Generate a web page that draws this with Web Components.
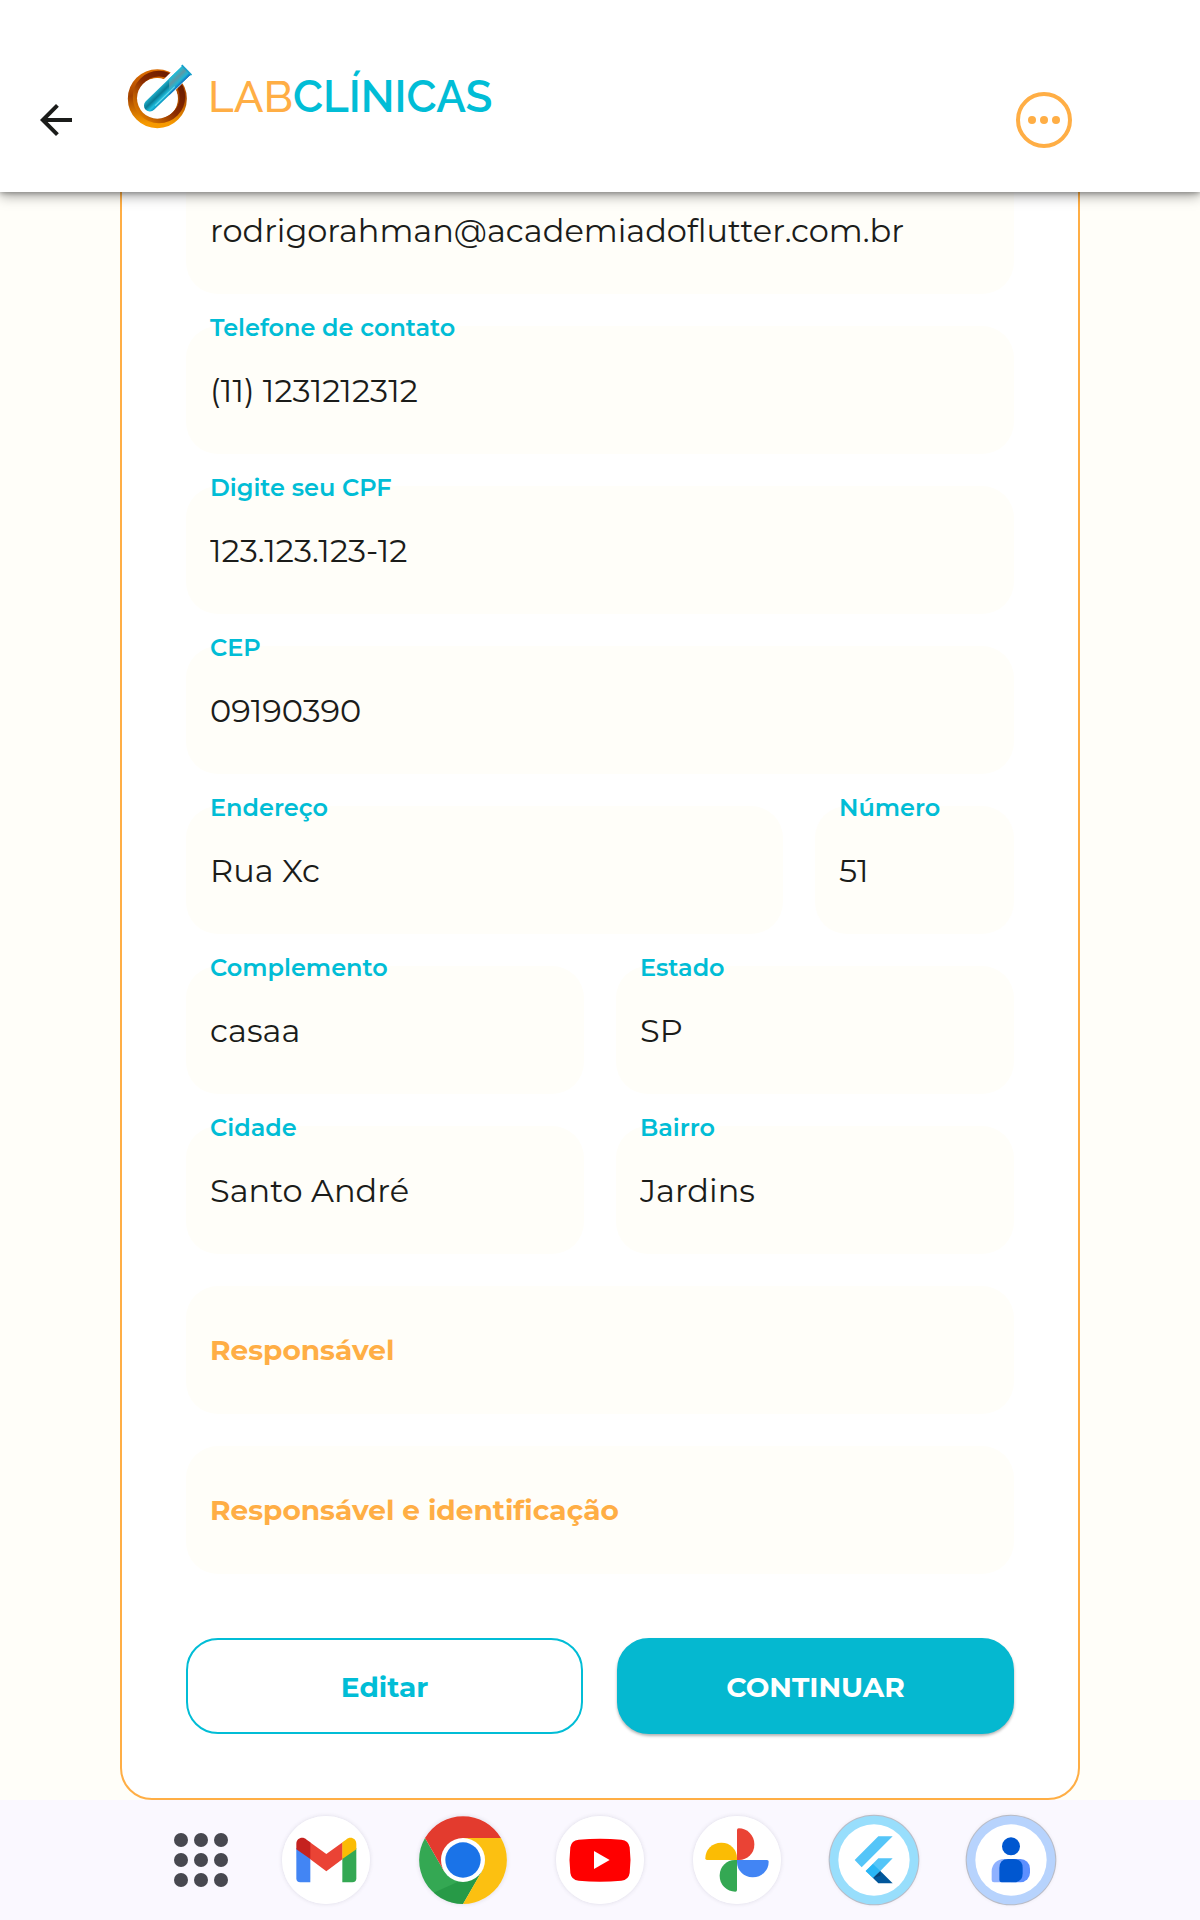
<!DOCTYPE html>
<html lang="pt-BR">
<head>
<meta charset="utf-8">
<meta name="viewport" content="width=device-width, initial-scale=1">
<title>LabClínicas</title>
<style>
  :root {
    --cyan: #01bdd6;
    --orange: #ffae45;
    --cream: #fffef9;
    --ink: #1b1c1a;
  }
  body {
    margin: 0;
    background: var(--cream);
    color: var(--ink);
    font-family: Montserrat, Inter, "Open Sans", sans-serif;
  }
</style>
</head>
<body>
<lab-app>
  <lab-header slot="header"></lab-header>
  <lab-card>
    <lab-field name="email" hint="E-mail" value="rodrigorahman@academiadoflutter.com.br"></lab-field>
    <lab-field name="phone" value="(11) 1231212312">Telefone de contato</lab-field>
    <lab-field name="cpf" value="123.123.123-12">Digite seu CPF</lab-field>
    <lab-field name="cep" value="09190390">CEP</lab-field>
    <lab-row>
      <lab-field wide name="street" value="Rua Xc">Endereço</lab-field>
      <lab-field name="number" value="51">Número</lab-field>
    </lab-row>
    <lab-row>
      <lab-field name="complement" value="casaa">Complemento</lab-field>
      <lab-field name="state" value="SP">Estado</lab-field>
    </lab-row>
    <lab-row>
      <lab-field name="city" value="Santo André">Cidade</lab-field>
      <lab-field name="district" value="Jardins">Bairro</lab-field>
    </lab-row>
    <lab-field name="guardian">Responsável</lab-field>
    <lab-field name="guardian-id">Responsável e identificação</lab-field>
    <lab-row slot="actions">
      <lab-button>Editar</lab-button>
      <lab-button filled>CONTINUAR</lab-button>
    </lab-row>
  </lab-card>
  <lab-taskbar slot="taskbar"></lab-taskbar>
</lab-app>

<script>
class Base extends HTMLElement {
  connectedCallback() {
    if (this.shadowRoot) return;
    this.attachShadow({ mode: "open" }).innerHTML =
      `<style>*{box-sizing:border-box}:host{display:block;box-sizing:border-box}</style>` + this.render();
  }
}

customElements.define("lab-app", class extends Base {
  render() {
    return `<style>
      :host { display: flex; flex-direction: column; height: 100vh; }
      main { flex: 1; min-height: 0; overflow: hidden; display: flex; flex-direction: column;
             justify-content: flex-end; padding: 0 10%; }
    </style>
    <slot name="header"></slot><main><slot></slot></main><slot name="taskbar"></slot>`;
  }
});

customElements.define("lab-header", class extends Base {
  render() {
    return `<style>
      :host { position: relative; z-index: 1; background: #fff; flex: none;
              box-shadow: 0 4px 12px rgba(0,0,0,.35), 0 1px 5px rgba(0,0,0,.3); }
      header { display: flex; align-items: center; height: 192px; padding: 48px 128px 0 32px; gap: 48px; }
      button { border: 0; background: none; padding: 0; display: block; flex: none; }
      svg { display: block; flex: none; overflow: visible; }
      .brand { flex: 1; align-self: flex-start; display: flex; align-items: flex-start; gap: 16px; padding-top: 16px; }
      h1 { margin: 0; font: 600 44px/66px Raleway, Lato, sans-serif; color: var(--cyan); white-space: nowrap; }
      h1 span { color: var(--orange); font-weight: 500; }
    </style>
    <header>
      <button aria-label="Voltar">
        <svg width="48" height="48" viewBox="0 0 24 24"><path fill="#1b1c1a" d="M20 11H7.83l5.59-5.59L12 4l-8 8 8 8 1.41-1.41L7.83 13H20z"/></svg>
      </button>
      <div class="brand">
        <svg width="64" height="64" viewBox="0 0 192 192">
          <defs>
            <linearGradient id="rim" x1="0" y1="0" x2="0" y2="1"><stop offset="0" stop-color="#d96a00"/><stop offset=".45" stop-color="#a34200"/><stop offset="1" stop-color="#f79a00"/></linearGradient>
            <linearGradient id="in" x1="0" y1="1" x2="1" y2="0"><stop offset="0" stop-color="#f08c00"/><stop offset=".5" stop-color="#8a2b00"/><stop offset="1" stop-color="#5e1500"/></linearGradient>
            <linearGradient id="tube" x1="0" y1="0" x2="0" y2="1"><stop offset="0" stop-color="#20aeca"/><stop offset=".4" stop-color="#087a94"/><stop offset=".75" stop-color="#20bfdf"/><stop offset="1" stop-color="#0a94c0"/></linearGradient>
            <linearGradient id="glass" x1="0" y1="0" x2="0" y2="1"><stop offset="0" stop-color="#1ac0dc"/><stop offset=".4" stop-color="#5d98a4"/><stop offset=".75" stop-color="#22b5d4"/><stop offset="1" stop-color="#0d6fc0"/></linearGradient>
          </defs>
          <circle cx="88" cy="104" r="75" fill="none" stroke="url(#rim)" stroke-width="27"/>
          <circle cx="93" cy="99" r="70" fill="none" stroke="url(#in)" stroke-width="17"/>
          <circle cx="88" cy="103" r="61" fill="#fff"/>
          <path d="M88 98 180 8" stroke="#fff" stroke-width="48"/>
          <g transform="translate(55 135) rotate(-44)">
            <path fill="url(#tube)" d="M15-18H167V18H15A18 18 0 0 1 15-18"/>
            <path fill="url(#glass)" d="M112-18H167V18H78Z"/>
            <path fill="none" stroke="#159fcb" stroke-width="5" d="M168-21V21"/>
            <path stroke="#8ceaf5" stroke-width="3" opacity=".7" d="M26 11H108"/>
          </g>
        </svg>
        <h1><span>LAB</span>CLÍNICAS</h1>
      </div>
      <button aria-label="Mais opções">
        <svg width="56" height="56" viewBox="0 0 56 56" fill="#ffae45"><circle cx="28" cy="28" r="26" fill="none" stroke="#ffae45" stroke-width="4"/><circle cx="16" cy="28" r="4"/><circle cx="28" cy="28" r="4"/><circle cx="40" cy="28" r="4"/></svg>
      </button>
    </header>`;
  }
});

customElements.define("lab-card", class extends Base {
  render() {
    return `<style>
      :host { flex: none; background: #fff; border: 2px solid var(--orange); border-radius: 32px; padding: 64px; }
      form { display: flex; flex-direction: column; gap: 32px; }
      .actions { padding-top: 32px; --gap: 34px; }
    </style>
    <form><slot></slot><div class="actions"><slot name="actions"></slot></div></form>`;
  }
});

customElements.define("lab-row", class extends Base {
  render() {
    return `<style>:host { display: flex; gap: var(--gap, 32px); } ::slotted(*) { flex: 1 1 0; min-width: 0; } ::slotted([wide]) { flex-grow: 3; }</style><slot></slot>`;
  }
});

customElements.define("lab-field", class extends Base {
  render() {
    const id = this.getAttribute("name");
    const value = this.getAttribute("value") || "";
    const hint = this.getAttribute("hint");
    return `<style>
      .box { display: grid; height: 128px; background: var(--cream); border-radius: 32px; }
      label, input { grid-area: 1 / 1; }
      label { align-self: start; justify-self: start; margin: -14px 24px 0; z-index: 1; white-space: nowrap;
              font-size: 24px; line-height: 32px; font-weight: 600; color: var(--cyan); }
      label.rest { align-self: center; margin-top: 0; font-size: 28px; font-weight: 700; color: var(--orange); }
      input { width: 100%; min-width: 0; border: 0; outline: 0; background: none; padding: 0 24px;
              font: inherit; font-size: 32px; font-weight: 400; color: inherit; }
    </style>
    <div class="box">
      ${hint ? "" : `<label for="${id}" class="${value ? "" : "rest"}"><slot></slot></label>`}
      <input id="${id}" name="${id}" value="${value}" ${hint ? `aria-label="${hint}"` : ""}>
    </div>`;
  }
});

customElements.define("lab-button", class extends Base {
  render() {
    return `<style>
      button { display: block; width: 100%; height: 96px; padding: 2px 0 0; border: 2px solid var(--cyan); border-radius: 32px;
               background: #fff; color: var(--cyan); font: inherit; font-size: 28px; font-weight: 700; }
      :host([filled]) button { background: #05b8d0; border-color: #05b8d0; color: #fff;
               box-shadow: 0 2px 3px rgba(0,0,0,.3); }
    </style><button type="button"><slot></slot></button>`;
  }
});

const disc = '<circle r="132" fill="#fff"/>';
const badge = (c) => `<circle r="136" fill="#b9bcc6"/><circle r="133" fill="${c}"/><circle r="107" fill="#fff"/>`;
const petal = "M0-90Q0-95 5-95A47 47 0 0 1 52-48V-46A46 46 0 0 1 6 0H0Z";
const APPS = {
  "Gmail": disc + `<path fill="#4285f4" d="M-89-36-47-6V67H-77A12 12 0 0 1-89 55Z"/><path fill="#34a853" d="M91-36 49-6V67H79A12 12 0 0 0 91 55Z"/><path fill="#ea4335" d="M-48-53 1-18 50-53V-3L1 34-48-3Z"/><path fill="#c5221f" d="M-89-32V-48C-89-66-70-72-58-61L-47-53V-3Z"/><path fill="#fbbc04" d="M91-32V-48C91-66 72-72 60-61L49-53V-3Z"/>`,
  "Chrome": `<path fill="#34a853" d="M-114-66-57 33H57L0 132A132 132 0 0 1-114-66"/><path fill="#1e8e3e" opacity=".55" d="M-88 98 57 33 0 132A132 132 0 0 1-88 98"/><path fill="#fcc011" d="M114-66A132 132 0 0 1 0 132L57 33 0-66Z"/><path fill="#e33b2e" d="M-114-66A132 132 0 0 1 114-66H0L-57 33Z"/><circle r="66" fill="#fff"/><circle r="53" fill="#1a73e8"/>`,
  "YouTube": disc + `<path fill="#f00" d="M-64-61Q0-67 64-61Q86-59 89-38Q94 0 89 39Q86 60 64 62Q0 68-64 62Q-86 60-89 39Q-94 0-89-38Q-86-59-64-61"/><path fill="#fff" d="M-18-27 29 0-18 27Z"/>`,
  "Fotos": disc + `<path fill="#ea4335" d="${petal}"/><path fill="#fbbc04" transform="rotate(-90)" d="${petal}"/><path fill="#34a853" transform="rotate(180)" d="${petal}"/><path fill="#4285f4" transform="rotate(90)" d="${petal}"/>`,
  "Flutter": badge("#98defc") + `<path fill="#54c5f8" d="M13-71H56L-37 22-58 0ZM13-5H56L19 33-3 54-25 33Z"/><path fill="#29b6f6" d="M-25 33-3 12 19 33-3 54Z"/><path fill="#01579b" d="M-3 54 19 33 56 70H13Z"/><path fill="#0a3c6b" opacity=".7" d="M-3 54 19 33V47Z"/>`,
  "Contatos": badge("#b7d3fd") + `<path fill="#8fb1ff" d="M-58 60V34A37 37 0 0 1-21-3H0V67H-51Q-58 67-58 60"/><path fill="#5c8fff" d="M0-3H28A29 29 0 0 1 57 26V38A29 29 0 0 1 28 67H0Z"/><path fill="#0057d0" d="M-35 60V24Q-35-3-8-3H8Q35-3 35 24V40Q35 67 8 67H-28Q-35 67-35 60"/><circle cy="-41" r="27" fill="#0057d0"/>`
};

customElements.define("lab-taskbar", class extends Base {
  render() {
    let dots = "";
    for (const y of [7, 27, 47]) for (const x of [7, 27, 47]) dots += `<circle cx="${x}" cy="${y}" r="7"/>`;
    return `<style>
      :host { flex: none; background: #faf8ff; }
      nav, .apps { display: flex; align-items: center; justify-content: center; }
      nav { height: 120px; gap: 24px; padding: 0 1px 1px 0; }
      .apps { gap: 49px; }
      button { border: 0; padding: 0; background: none; display: flex; justify-content: center; }
      .all { width: 114px; }
      .app { width: 88px; height: 88px; border-radius: 50%; box-shadow: 0 0 4px rgba(60,60,90,.16); }
      svg { display: block; overflow: visible; }
    </style>
    <nav>
      <button class="all" aria-label="Todos os apps"><svg width="54" height="54" viewBox="0 0 54 54" fill="#474850">${dots}</svg></button>
      <div class="apps">${Object.entries(APPS).map(([name, art]) =>
        `<button class="app" aria-label="${name}"><svg width="88" height="88" viewBox="-132 -132 264 264">${art}</svg></button>`).join("")}</div>
    </nav>`;
  }
});
</script>
</body>
</html>
